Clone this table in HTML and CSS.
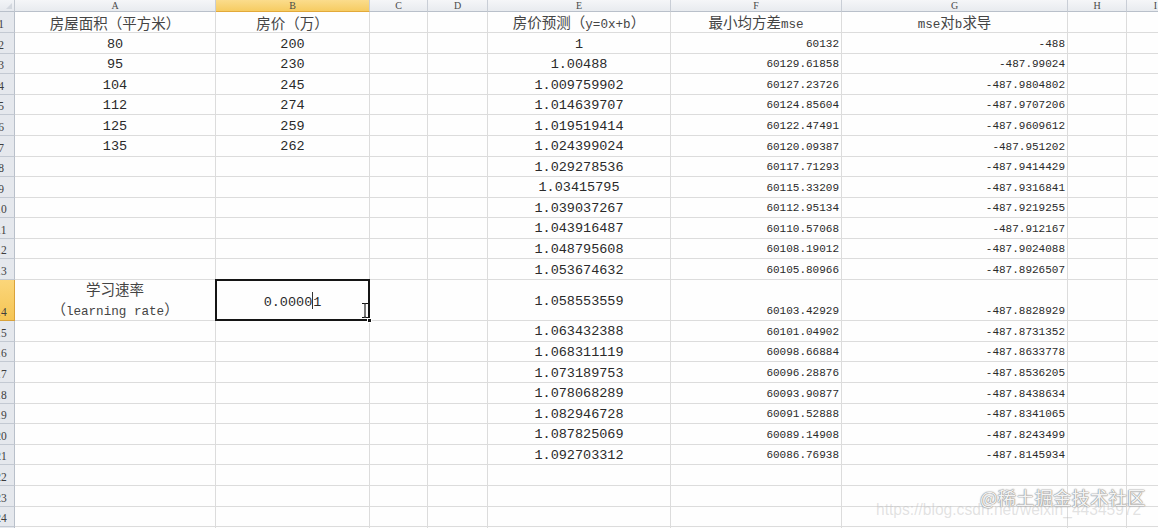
FILE: index.html
```html
<!DOCTYPE html>
<html lang="zh-CN">
<head>
<meta charset="utf-8">
<title>房价预测</title>
<link rel="stylesheet" href="styles.css">
</head>
<body>
<div class="sheet">
  <!-- column headers -->
  <div class="corner"></div>
  <div class="ch">A</div><div class="ch sel">B</div><div class="ch">C</div><div class="ch">D</div><div class="ch">E</div><div class="ch">F</div><div class="ch">G</div><div class="ch">H</div><div class="ch">I</div>

  <!-- row 1 -->
  <div class="rh"><span>1</span></div>
  <div class="c hd"><span>房屋面积（平方米）</span></div><div class="c hd"><span>房价（万）</span></div><div class="c"></div><div class="c"></div>
  <div class="c hd"><span>房价预测（<span class="lat">y=0x+b</span>）</span></div><div class="c hd"><span>最小均方差<span class="lat">mse</span></span></div><div class="c hd"><span><span class="lat">mse</span>对<span class="lat">b</span>求导</span></div><div class="c"></div><div class="c"></div>

  <!-- row 2 -->
  <div class="rh"><span>2</span></div>
  <div class="c n">80</div><div class="c n">200</div><div class="c"></div><div class="c"></div>
  <div class="c n">1</div><div class="c sm">60132</div><div class="c sm">-488</div><div class="c"></div><div class="c"></div>

  <!-- row 3 -->
  <div class="rh"><span>3</span></div>
  <div class="c n">95</div><div class="c n">230</div><div class="c"></div><div class="c"></div>
  <div class="c n">1.00488</div><div class="c sm">60129.61858</div><div class="c sm">-487.99024</div><div class="c"></div><div class="c"></div>

  <!-- row 4 -->
  <div class="rh"><span>4</span></div>
  <div class="c n">104</div><div class="c n">245</div><div class="c"></div><div class="c"></div>
  <div class="c n">1.009759902</div><div class="c sm">60127.23726</div><div class="c sm">-487.9804802</div><div class="c"></div><div class="c"></div>

  <!-- row 5 -->
  <div class="rh"><span>5</span></div>
  <div class="c n">112</div><div class="c n">274</div><div class="c"></div><div class="c"></div>
  <div class="c n">1.014639707</div><div class="c sm">60124.85604</div><div class="c sm">-487.9707206</div><div class="c"></div><div class="c"></div>

  <!-- row 6 -->
  <div class="rh"><span>6</span></div>
  <div class="c n">125</div><div class="c n">259</div><div class="c"></div><div class="c"></div>
  <div class="c n">1.019519414</div><div class="c sm">60122.47491</div><div class="c sm">-487.9609612</div><div class="c"></div><div class="c"></div>

  <!-- row 7 -->
  <div class="rh"><span>7</span></div>
  <div class="c n">135</div><div class="c n">262</div><div class="c"></div><div class="c"></div>
  <div class="c n">1.024399024</div><div class="c sm">60120.09387</div><div class="c sm">-487.951202</div><div class="c"></div><div class="c"></div>

  <!-- row 8 -->
  <div class="rh"><span>8</span></div>
  <div class="c"></div><div class="c"></div><div class="c"></div><div class="c"></div>
  <div class="c n">1.029278536</div><div class="c sm">60117.71293</div><div class="c sm">-487.9414429</div><div class="c"></div><div class="c"></div>

  <!-- row 9 -->
  <div class="rh"><span>9</span></div>
  <div class="c"></div><div class="c"></div><div class="c"></div><div class="c"></div>
  <div class="c n">1.03415795</div><div class="c sm">60115.33209</div><div class="c sm">-487.9316841</div><div class="c"></div><div class="c"></div>

  <!-- row 10 -->
  <div class="rh"><span>10</span></div>
  <div class="c"></div><div class="c"></div><div class="c"></div><div class="c"></div>
  <div class="c n">1.039037267</div><div class="c sm">60112.95134</div><div class="c sm">-487.9219255</div><div class="c"></div><div class="c"></div>

  <!-- row 11 -->
  <div class="rh"><span>11</span></div>
  <div class="c"></div><div class="c"></div><div class="c"></div><div class="c"></div>
  <div class="c n">1.043916487</div><div class="c sm">60110.57068</div><div class="c sm">-487.912167</div><div class="c"></div><div class="c"></div>

  <!-- row 12 -->
  <div class="rh"><span>12</span></div>
  <div class="c"></div><div class="c"></div><div class="c"></div><div class="c"></div>
  <div class="c n">1.048795608</div><div class="c sm">60108.19012</div><div class="c sm">-487.9024088</div><div class="c"></div><div class="c"></div>

  <!-- row 13 -->
  <div class="rh"><span>13</span></div>
  <div class="c"></div><div class="c"></div><div class="c"></div><div class="c"></div>
  <div class="c n">1.053674632</div><div class="c sm">60105.80966</div><div class="c sm">-487.8926507</div><div class="c"></div><div class="c"></div>

  <!-- row 14 (tall, active) -->
  <div class="rh sel"><span>14</span></div>
  <div class="c hd two"><span>学习速率</span><span>（<span class="lat">learning rate</span>）</span></div>
  <div class="c n active"><span>0.0000<span class="caret"></span>1</span><span class="handle"></span>
    <svg class="ibeam" width="8" height="17" viewBox="0 0 8 17"><path d="M1 1.5h2.2l.8.8.8-.8H7M4 2.3v12.4M1 15.5h2.2l.8-.8.8.8H7" fill="none" stroke="#fff" stroke-width="2.6"/><path d="M1 1.5h2.2l.8.8.8-.8H7M4 2.3v12.4M1 15.5h2.2l.8-.8.8.8H7" fill="none" stroke="#111" stroke-width="1.1"/></svg>
  </div>
  <div class="c"></div><div class="c"></div>
  <div class="c n">1.058553559</div><div class="c sm">60103.42929</div><div class="c sm">-487.8828929</div><div class="c"></div><div class="c"></div>

  <!-- row 15 -->
  <div class="rh"><span>15</span></div>
  <div class="c"></div><div class="c"></div><div class="c"></div><div class="c"></div>
  <div class="c n">1.063432388</div><div class="c sm">60101.04902</div><div class="c sm">-487.8731352</div><div class="c"></div><div class="c"></div>

  <!-- row 16 -->
  <div class="rh"><span>16</span></div>
  <div class="c"></div><div class="c"></div><div class="c"></div><div class="c"></div>
  <div class="c n">1.068311119</div><div class="c sm">60098.66884</div><div class="c sm">-487.8633778</div><div class="c"></div><div class="c"></div>

  <!-- row 17 -->
  <div class="rh"><span>17</span></div>
  <div class="c"></div><div class="c"></div><div class="c"></div><div class="c"></div>
  <div class="c n">1.073189753</div><div class="c sm">60096.28876</div><div class="c sm">-487.8536205</div><div class="c"></div><div class="c"></div>

  <!-- row 18 -->
  <div class="rh"><span>18</span></div>
  <div class="c"></div><div class="c"></div><div class="c"></div><div class="c"></div>
  <div class="c n">1.078068289</div><div class="c sm">60093.90877</div><div class="c sm">-487.8438634</div><div class="c"></div><div class="c"></div>

  <!-- row 19 -->
  <div class="rh"><span>19</span></div>
  <div class="c"></div><div class="c"></div><div class="c"></div><div class="c"></div>
  <div class="c n">1.082946728</div><div class="c sm">60091.52888</div><div class="c sm">-487.8341065</div><div class="c"></div><div class="c"></div>

  <!-- row 20 -->
  <div class="rh"><span>20</span></div>
  <div class="c"></div><div class="c"></div><div class="c"></div><div class="c"></div>
  <div class="c n">1.087825069</div><div class="c sm">60089.14908</div><div class="c sm">-487.8243499</div><div class="c"></div><div class="c"></div>

  <!-- row 21 -->
  <div class="rh"><span>21</span></div>
  <div class="c"></div><div class="c"></div><div class="c"></div><div class="c"></div>
  <div class="c n">1.092703312</div><div class="c sm">60086.76938</div><div class="c sm">-487.8145934</div><div class="c"></div><div class="c"></div>

  <!-- row 22 -->
  <div class="rh"><span>22</span></div>
  <div class="c"></div><div class="c"></div><div class="c"></div><div class="c"></div><div class="c"></div><div class="c"></div><div class="c"></div><div class="c"></div><div class="c"></div>

  <!-- row 23 -->
  <div class="rh"><span>23</span></div>
  <div class="c"></div><div class="c"></div><div class="c"></div><div class="c"></div><div class="c"></div><div class="c"></div><div class="c"></div><div class="c"></div><div class="c"></div>

  <!-- row 24 -->
  <div class="rh"><span>24</span></div>
  <div class="c"></div><div class="c"></div><div class="c"></div><div class="c"></div><div class="c"></div><div class="c"></div><div class="c"></div><div class="c"></div><div class="c"></div>

  <!-- row 25 -->
  <div class="rh"><span>25</span></div>
  <div class="c"></div><div class="c"></div><div class="c"></div><div class="c"></div><div class="c"></div><div class="c"></div><div class="c"></div><div class="c"></div><div class="c"></div>
</div>

<div class="wm-url">https://blog.csdn.net/weixin_44345972</div>
<div class="wm-logo">@稀土掘金技术社区</div>
</body>
</html>
```

FILE: styles.css
```css
* { box-sizing: border-box; }

html, body {
  margin: 0;
  padding: 0;
  width: 1158px;
  height: 528px;
  overflow: hidden;
  background: #fefefe;
}

body {
  position: relative;
  font-family: "Liberation Mono", "Noto Sans CJK SC", monospace;
  color: #262626;
}

.sheet {
  display: grid;
  grid-template-columns: 15px 201px 154px 58px 60px 183px 171px 226px 59px 58px;
  grid-template-rows: 12.3px 21px repeat(12, 20.56px) 41.3px repeat(11, 20.6px);
  width: 1185px;
}

.corner {
  background: linear-gradient(#f2f4f7, #e6e9ee);
  border-right: 1px solid #c2c8d0;
  border-bottom: 1px solid #b9c0ca;
  position: relative;
}
.corner::after {
  content: "";
  position: absolute;
  right: 2px;
  bottom: 2px;
  border-style: solid;
  border-width: 0 0 6px 6px;
  border-color: transparent transparent #d3d8df transparent;
}

.ch {
  background: linear-gradient(#f5f6f8, #e8ebef);
  border-right: 1px solid #c9ced6;
  border-bottom: 1px solid #b9c0ca;
  font-family: "Liberation Serif", serif;
  font-size: 10px;
  line-height: 12px;
  color: #4a4a4a;
  text-align: center;
}
.ch.sel {
  background: linear-gradient(#fbdc8c, #f6cc62);
  border-bottom-color: #e2a93a;
}

.rh {
  background: #e5e8ed;
  border-right: 1px solid #b9c0ca;
  border-bottom: 1px solid #c3c9d2;
  overflow: hidden;
  display: flex;
  align-items: flex-end;
  font-family: "Liberation Serif", serif;
  font-size: 11.5px;
  line-height: 13px;
  color: #3e3e3e;
}
.rh span {
  flex: none;
  display: block;
  width: 28px;
  margin-left: -13px;
  text-align: center;
  padding-bottom: 1px;
}
.rh.sel {
  background: linear-gradient(#fbd67a, #f5c555);
  border-bottom-color: #d9a23a;
  border-right-color: #d9a23a;
}

.c {
  border-right: 1px solid #dcdcdc;
  border-bottom: 1px solid #dcdcdc;
  display: flex;
  align-items: center;
  justify-content: center;
  white-space: nowrap;
  min-width: 0;
}

.hd {
  font-family: "Noto Sans CJK SC", sans-serif;
  font-size: 14.5px;
  line-height: 18px;
  color: #444;
  padding-top: 2px;
}
.lat {
  font-family: "Liberation Mono", monospace;
  font-size: 12.6px;
}
.hd.two {
  flex-direction: column;
  line-height: 20px;
  padding-top: 0;
}

.n {
  font-size: 13.5px;
  line-height: 16px;
  color: #2a2a2a;
  padding-top: 3px;
}

.sm {
  justify-content: flex-end;
  align-items: flex-end;
  font-size: 11px;
  line-height: 13px;
  padding: 0 2px 2px 0;
  color: #2a2a2a;
}

.active {
  position: relative;
}
.active::before {
  content: "";
  position: absolute;
  left: -1px;
  top: -1px;
  right: -1px;
  bottom: -1px;
  border: 2px solid #151515;
}
.caret {
  display: inline-block;
  width: 1px;
  height: 17px;
  margin: 0 0 -3px;
  background: #333;
}
.handle {
  position: absolute;
  right: -3px;
  bottom: -3px;
  width: 5px;
  height: 5px;
  background: #151515;
  border: 1px solid #fff;
}
.ibeam {
  position: absolute;
  right: 0;
  top: 22px;
}

.wm-url {
  position: absolute;
  left: 876px;
  top: 501px;
  font-family: "Liberation Sans", sans-serif;
  font-size: 15.6px;
  color: rgba(190, 190, 190, 0.45);
  white-space: nowrap;
}
.wm-logo {
  position: absolute;
  left: 980px;
  top: 485px;
  font-family: "Noto Sans CJK SC", sans-serif;
  font-size: 18.5px;
  line-height: 24px;
  color: #f4f4f4;
  text-shadow: 0 0 1px #8a8a8a, 0 0 1px #8a8a8a, 0 0 2px #aaa;
  white-space: nowrap;
}
```
